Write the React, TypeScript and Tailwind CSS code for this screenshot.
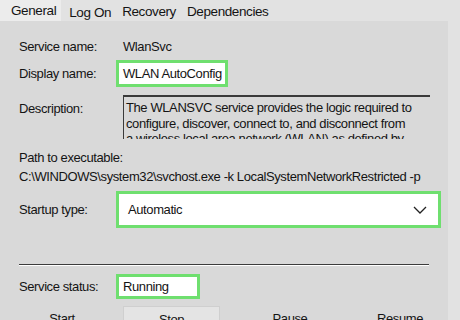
import React from "react";

const tabs = ["General", "Log On", "Recovery", "Dependencies"];

function GreenBox({ className, children }: { className: string; children: React.ReactNode }) {
  return (
    <div className={`border-[3px] border-[#6fdf6f] bg-white flex items-center ${className}`}>
      {children}
    </div>
  );
}

export default function App() {
  return (
    <div
      className="w-[460px] h-[320px] overflow-hidden bg-[#e2e2e2] text-[#141414] text-[13px] tracking-[-0.4px] leading-none"
      style={{ fontFamily: '"Liberation Sans", Arial, sans-serif' }}
    >
      {/* Tab strip */}
      <div className="flex h-[21px] items-stretch gap-[5px] text-[13.5px]">
        {tabs.map((t, i) => (
          <div
            key={t}
            className={`flex items-center ${i === 0 ? "pl-[11px] pr-[5px] bg-[#ececec]" : "px-[3px]"} ${
              i === 1 ? "pt-[4px]" : i > 1 ? "pt-[2px]" : ""
            }`}
          >
            {t}
          </div>
        ))}
      </div>

      {/* Page */}
      <div className="w-[448px] h-[299px] bg-[#d9d9d9] pl-[19px] pt-[18px]">
        <div className="flex items-center h-[14px]">
          <span className="w-[104px]">Service name:</span>
          <span>WlanSvc</span>
        </div>

        <div className="flex items-center mt-[7px]">
          <span className="w-[97px]">Display name:</span>
          <GreenBox className="w-[112px] h-[27px] pl-[4px]">WLAN AutoConfig</GreenBox>
        </div>

        <div className="flex mt-[8px]">
          <span className="w-[104px] pt-[7px]">Description:</span>
          <div className="w-[307px] h-[44px] overflow-hidden border-t-2 border-l border-[#3a3a3a] pl-[2px] pt-[3px] leading-[15.5px] whitespace-nowrap">
            The WLANSVC service provides the logic required to
            <br />
            configure, discover, connect to, and disconnect from
            <br />
            a wireless local area network (WLAN) as defined by
          </div>
        </div>

        <div className="mt-[12px]">Path to executable:</div>
        <div className="mt-[6px] whitespace-nowrap">
          C:\WINDOWS\system32\svchost.exe -k LocalSystemNetworkRestricted -p
        </div>

        <div className="flex items-center mt-[8px]">
          <span className="w-[97px]">Startup type:</span>
          <GreenBox className="w-[325px] h-[37px] pl-[9px] pr-[11px] justify-between">
            <span>Automatic</span>
            <svg width="14" height="8" viewBox="0 0 14 8" fill="none" stroke="#222" strokeWidth="1.3">
              <path d="M1 1l6 6 6-6" />
            </svg>
          </GreenBox>
        </div>

        <div className="mt-[36px] w-[410px] h-[2px] bg-[#3c3c3c] border-b border-white" />

        <div className="flex items-center mt-[8px]">
          <span className="w-[97px]">Service status:</span>
          <GreenBox className="w-[84px] h-[25px] pl-[4px]">Running</GreenBox>
        </div>

        <div className="flex mt-[7px]">
          <div className="w-[104px] h-[26px] flex justify-center pt-[6px] pr-[18px]">Start</div>
          <div className="w-[97px] h-[26px] flex justify-center pt-[6px] bg-[#e4e4e4] border border-[#cfcfcf]">Stop</div>
          <div className="w-[140px] h-[26px] flex justify-center pt-[6px]">Pause</div>
          <div className="w-[80px] h-[26px] flex justify-center pt-[6px]">Resume</div>
        </div>
      </div>
    </div>
  );
}
